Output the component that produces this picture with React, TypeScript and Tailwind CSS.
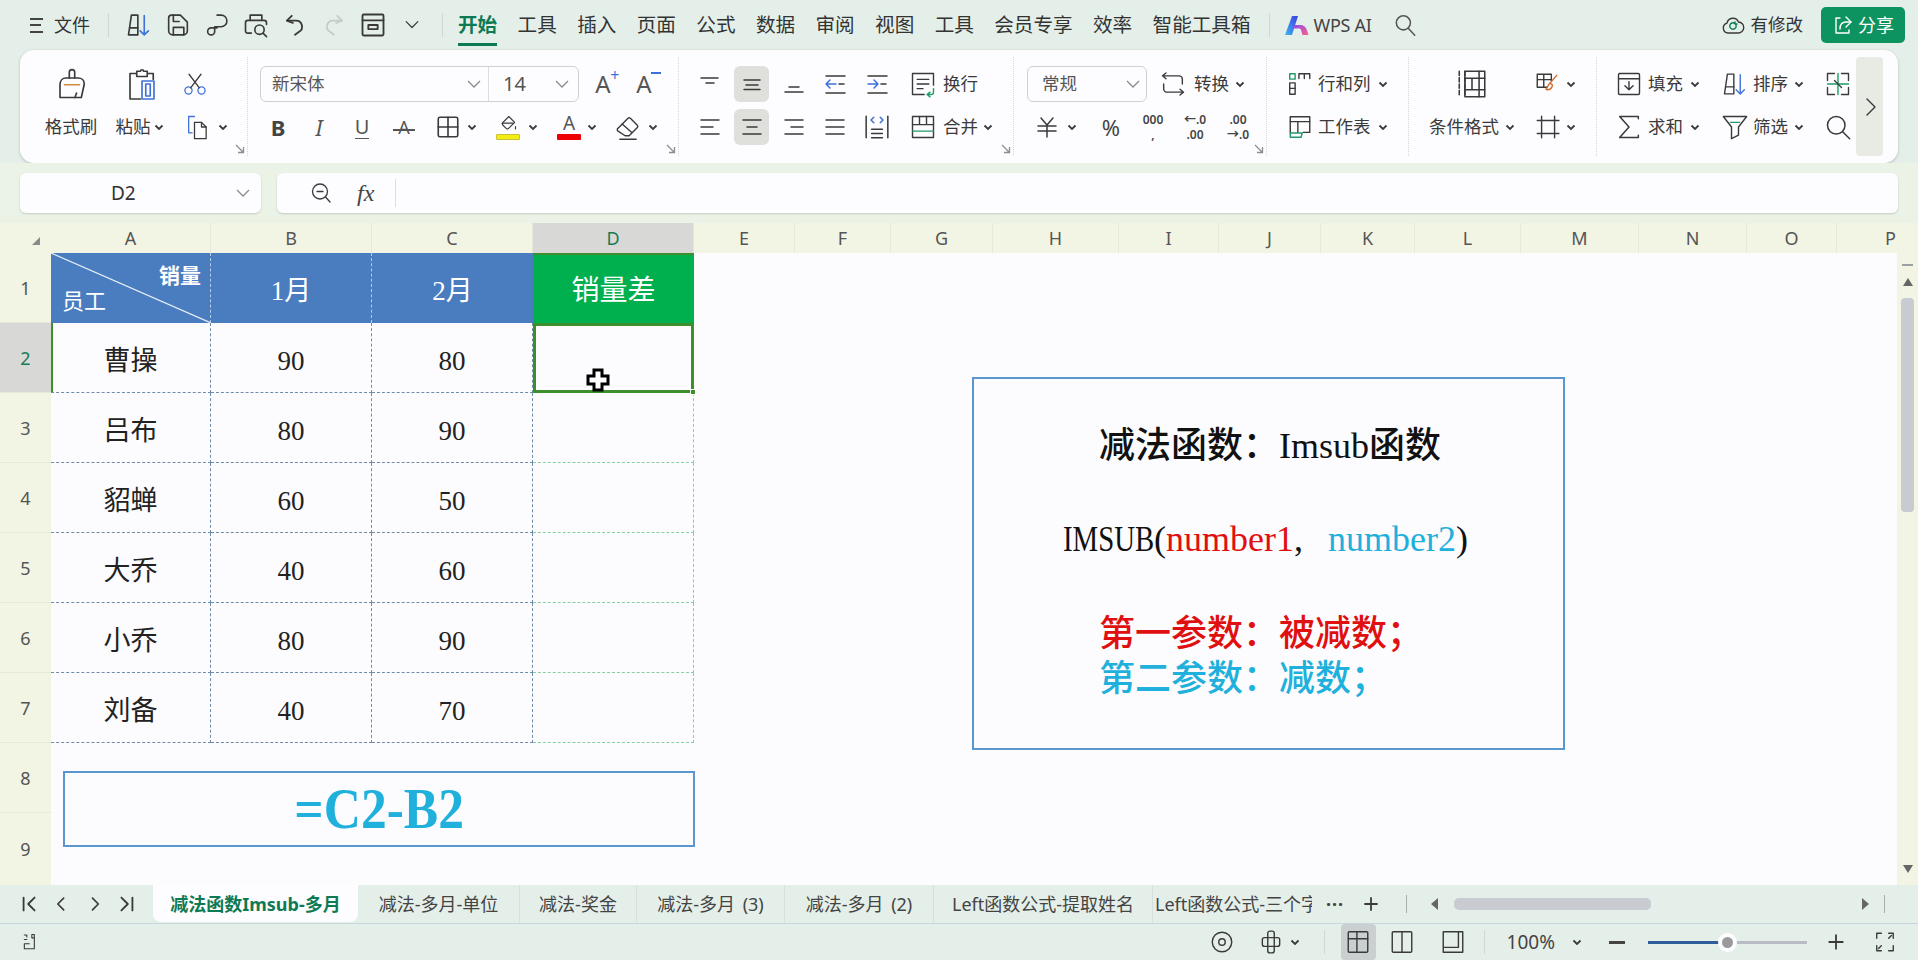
import React from 'react';

const uiFont = "font-['Noto_Sans','Noto_Sans_CJK_SC',sans-serif]";
const cellFont = "font-['Liberation_Serif','Noto_Sans_CJK_SC',serif]";

const Ic = ({ s = 24, w = 1.4, c = '#3a3a3a', children }: { s?: number; w?: number; c?: string; children: React.ReactNode }) => (
  <svg width={s} height={s} viewBox="0 0 24 24" fill="none" stroke={c} strokeWidth={w} strokeLinecap="round" strokeLinejoin="round">
    {children}
  </svg>
);

const Slot = ({ className = '', children }: { className?: string; children?: React.ReactNode }) => (
  <div className={`flex items-center justify-center shrink-0 ${className}`}>{children}</div>
);

const Row = ({ className = '', children }: { className?: string; children: React.ReactNode }) => (
  <div className={`flex items-center h-[42px] ${className}`}>{children}</div>
);

const Chev = () => (
  <Slot className="w-[12px]">
    <svg width="10" height="7" viewBox="0 0 10 7" fill="none" stroke="#3a3a3a" strokeWidth="1.8">
      <path d="M1.5 1.5L5 5l3.5-3.5" />
    </svg>
  </Slot>
);

const SelectChev = () => (
  <svg width="16" height="10" viewBox="0 0 16 10" fill="none" stroke="#8a8a8a" strokeWidth="1.3">
    <path d="M2 2l6 6 6-6" />
  </svg>
);

const Launcher = () => (
  <svg className="absolute right-[2px] bottom-[2px]" width="10" height="10" viewBox="0 0 10 10" fill="none" stroke="#8d8d8d" strokeWidth="1.3">
    <path d="M1 1l7 7M8.5 3v5.5H3" />
  </svg>
);

const Label = ({ children, className = '' }: { children: React.ReactNode; className?: string }) => (
  <span className={`text-[17.5px] leading-none whitespace-nowrap text-[#3a3a3a] ${className}`}>{children}</span>
);

const Lines = ({ d }: { d: string }) => (
  <Ic s={24} w={1.5}>
    <path d={d} />
  </Ic>
);

const CornerFloat = () => (
  <svg width="10" height="10" viewBox="0 0 10 10" className="ml-[21px] mt-[13px]">
    <path d="M9 1v8H1z" fill="#8a8a8a" />
  </svg>
);

const topTabs = ['工具', '插入', '页面', '公式', '数据', '审阅', '视图', '工具', '会员专享', '效率', '智能工具箱'];

const TopBar = () => (
  <div className="flex items-center h-[50px] shrink-0 text-[#333]">
    <div className="ml-[30px] w-[13px] h-[15px] flex flex-col justify-between">
      <div className="h-[2px] bg-[#444]" />
      <div className="h-[2px] w-[11px] bg-[#444]" />
      <div className="h-[2px] bg-[#444]" />
    </div>
    <span className="ml-[11px] text-[18px] leading-none">文件</span>
    <div className="ml-[18px] w-px h-[24px] bg-[#cfd8d4]" />
    <div className="ml-[12px] flex gap-[3px]">
      <Slot className="w-[36px]">
        <Ic s={28}>
          <path d="M3 20.5L5.5 3.5H11v17z" />
          <path d="M4 14.5h7" />
          <path d="M16.5 4v16.5M13 17l3.5 3.5L20 17" stroke="#3f72d8" />
        </Ic>
      </Slot>
      <Slot className="w-[36px]">
        <Ic s={28}>
          <path d="M4 6a2.5 2.5 0 0 1 2.5-2.5H14l6 6V17a3.5 3.5 0 0 1-3.5 3.5h-9A3.5 3.5 0 0 1 4 17z" />
          <path d="M8 20.5V14h9v6.5M8 3.5V9h5" />
        </Ic>
      </Slot>
      <Slot className="w-[36px]">
        <Ic s={28}>
          <path d="M12 3.5h3.5a5 5 0 0 1 0 10H10v4a3 3 0 1 1-3-3h5" />
        </Ic>
      </Slot>
      <Slot className="w-[36px]">
        <Ic s={28}>
          <path d="M7 8V3.5h10V8" />
          <path d="M8 19H5a2 2 0 0 1-2-2V10a2 2 0 0 1 2-2h14a2 2 0 0 1 2 2v1.5" />
          <circle cx="15" cy="16" r="4" />
          <path d="M18 19l3 3" />
        </Ic>
      </Slot>
      <Slot className="w-[36px]">
        <Ic s={26} w={1.7}>
          <path d="M9 3.5L4.5 8 10 10" />
          <path d="M5 8h8a5.5 5.5 0 0 1 2.5 10.4L12 21" />
        </Ic>
      </Slot>
      <Slot className="w-[36px]">
        <Ic s={26} w={1.7} c="#c6cdc9">
          <path d="M15 3.5L19.5 8 14 10" />
          <path d="M19 8h-8a5.5 5.5 0 0 0-2.5 10.4L12 21" />
        </Ic>
      </Slot>
      <Slot className="w-[36px]">
        <Ic s={28} w={1.6}>
          <rect x="3" y="3" width="18" height="18" rx="1" />
          <path d="M3 8h18" />
          <rect x="8" y="12" width="8" height="3.5" />
        </Ic>
      </Slot>
      <Slot className="w-[36px]">
        <Ic s={20} w={1.5}>
          <path d="M5 8l7 7 7-7" />
        </Ic>
      </Slot>
    </div>
    <div className="ml-[12px] w-px h-[24px] bg-[#cfd8d4]" />
    <div className="ml-[15px] flex items-center gap-[20.4px] text-[19.6px] leading-none whitespace-nowrap">
      <span className="relative font-bold text-[#0e7a53]">
        开始
        <span className="absolute left-0 right-0 top-[28px] h-[3px] bg-[#0e7a53]" />
      </span>
      {topTabs.map((t, i) => (
        <span key={i}>{t}</span>
      ))}
    </div>
    <div className="ml-[18px] w-px h-[24px] bg-[#cfd8d4]" />
    <svg className="ml-[14px]" width="26" height="19" viewBox="0 0 26 19">
      <defs>
        <linearGradient id="wpsA" x1="0" y1="1" x2="1" y2="0">
          <stop offset="0" stopColor="#3fb5f0" />
          <stop offset="1" stopColor="#3b3fe0" />
        </linearGradient>
        <linearGradient id="wpsB" x1="0" y1="0" x2="1" y2="1">
          <stop offset="0" stopColor="#8a4cf0" />
          <stop offset="1" stopColor="#ff5f8a" />
        </linearGradient>
      </defs>
      <path d="M1 19L8 0h6L8 19z" fill="url(#wpsA)" />
      <path d="M10.5 9h6c3 0 5 2 6 4l2 6h-6l-1.5-5c-.5-1.2-1-1.5-2-1.5H9z" fill="url(#wpsB)" />
    </svg>
    <span className="ml-[4px] text-[18px] leading-none text-[#444] tracking-[-0.3px]">WPS AI</span>
    <div className="ml-[20px]">
      <Ic s={26} w={1.4} c="#555">
        <circle cx="10.5" cy="10" r="6.5" />
        <path d="M15 15l6 6.5" />
      </Ic>
    </div>
    <div className="ml-auto flex items-center">
      <Ic s={24} w={1.4}>
        <path d="M7 20a5 5 0 0 1-1-9.8A6 6 0 0 1 17.5 9 5.5 5.5 0 0 1 17 20z" />
        <path d="M15 12a3.2 3.2 0 1 1-1.2-1.6M14 9v2h2" stroke="#0e7a53" />
      </Ic>
      <span className="ml-[6px] text-[17.5px] leading-none">有修改</span>
      <div className="ml-[18px] mr-[13px] w-[84px] h-[36px] rounded-[5px] bg-[#0c9360] flex items-center pl-[10px] text-white">
        <Ic s={24} w={1.4} c="#fff">
          <path d="M15 4l5 5-5 5" />
          <path d="M20 9h-5c-4 0-6 3-6 7" />
          <path d="M9 5H5v15h13v-3" />
        </Ic>
        <span className="ml-[3px] text-[18px] leading-none">分享</span>
      </div>
    </div>
  </div>
);

const Group = ({ className = '', launcher = true, children }: { className?: string; launcher?: boolean; children: React.ReactNode }) => (
  <div className={`relative h-full shrink-0 pt-[6px] border-r border-dotted border-[#d3d6da] ${className}`}>
    {children}
    {launcher && <Launcher />}
  </div>
);

const Ribbon = () => (
  <div className="mx-[20px] h-[113px] shrink-0 rounded-[14px] bg-[#fdfdff] shadow-[0_1px_3px_rgba(90,100,100,0.35)] flex py-[7px]">
    {/* 剪贴板 */}
    <Group className="w-[228px] pl-[16px] flex gap-y-px">
      <div className="w-[70px] flex flex-col gap-px">
        <Row className="justify-center pl-[2px]">
          <Ic s={36} w={1.1}>
            <path d="M10.2 8V4.2a1.8 1.8 0 0 1 3.6 0V8" />
            <path d="M4 12.5C4 10 5.5 8 8 8h8c2.5 0 4.2 1.6 4.2 4l-2 9H4z" />
            <path d="M7 12.5h10" stroke="#d08a3a" />
            <path d="M14 21l1-3" />
          </Ic>
        </Row>
        <Row className="justify-center">
          <Label>格式刷</Label>
        </Row>
      </div>
      <div className="w-[72px] flex flex-col gap-px">
        <Row className="justify-center">
          <Ic s={36} w={1.1}>
            <path d="M8 5H4v17h7" />
            <path d="M8.5 7V3.5h2.5a1 1 0 0 1 2 0h2.5V7z" />
            <path d="M16 5h3.5v4" />
            <rect x="12" y="10" width="8" height="12" stroke="#3f72d8" />
            <rect x="14.5" y="12" width="3" height="8" stroke="#3f72d8" />
          </Ic>
        </Row>
        <Row className="justify-center gap-[2px] pr-[4px]">
          <Label>粘贴</Label>
          <Chev />
        </Row>
      </div>
      <div className="w-[54px] flex flex-col gap-px">
        <Row className="justify-start pl-[4px]">
          <Ic s={26} w={1.2}>
            <circle cx="6" cy="18" r="3.3" stroke="#3f72d8" />
            <circle cx="18" cy="18" r="3.3" stroke="#3f72d8" />
            <path d="M8 15.5L17.5 3M16 15.5L6.5 3" />
          </Ic>
        </Row>
        <Row className="justify-start pl-[6px]">
          <Ic s={28} w={1.1}>
            <path d="M9 3H4v14h3" stroke="#3f72d8" />
            <path d="M9 8h6l4 4v10H9z" />
            <path d="M15 8v4h4" />
          </Ic>
          <div className="ml-[5px]">
            <Chev />
          </div>
        </Row>
      </div>
    </Group>

    {/* 字体 */}
    <Group className="w-[431px]">
      <Row className="pl-[12px]">
        <div className="w-[319px] h-[36px] rounded-[6px] border border-[#cfd0d6] flex items-center text-[#555]">
          <div className="w-[228px] h-full pl-[11px] pr-[6px] flex items-center justify-between border-r border-[#dcdde2] text-[17.5px] leading-none">
            新宋体
            <SelectChev />
          </div>
          <div className="flex-1 h-full pl-[14px] pr-[8px] flex items-center justify-between text-[20px] leading-none">
            14
            <SelectChev />
          </div>
        </div>
        <Slot className="ml-[5px] w-[38px]">
          <span className="relative text-[24px] leading-none text-[#555]">
            A
            <span className="absolute left-[15px] top-[-5px] text-[16px] text-[#3f72d8]">+</span>
          </span>
        </Slot>
        <Slot className="w-[44px]">
          <span className="relative text-[24px] leading-none text-[#555]">
            A
            <span className="absolute left-[15px] top-[0px] w-[10px] h-[2px] bg-[#3f72d8]" />
          </span>
        </Slot>
      </Row>
      <Row className="mt-px pl-[10px]">
        <Slot className="w-[40px] text-[22px] font-bold leading-none text-[#444]">B</Slot>
        <Slot className="w-[42px] text-[22px] italic leading-none text-[#555]">I</Slot>
        <Slot className="w-[44px]">
          <span className="text-[20px] leading-[22px] text-[#555] border-b-[1.5px] border-[#555]">U</span>
        </Slot>
        <Slot className="w-[40px]">
          <span className="relative text-[18px] leading-none text-[#555]">
            A
            <span className="absolute left-[-5px] right-[-5px] top-[11px] h-[2px] bg-[#555]" />
          </span>
        </Slot>
        <Slot className="ml-[6px] w-[36px]">
          <Ic s={26} w={1.5}>
            <rect x="3" y="3" width="18" height="18" rx="1.5" />
            <path d="M12 3v18M3 12h18" />
          </Ic>
        </Slot>
        <Chev />
        <Slot className="ml-[12px] w-[36px]">
          <div className="flex flex-col items-center">
            <Ic s={20} w={1.4}>
              <path d="M13 3l7 7-7 7a2.5 2.5 0 0 1-3.5 0L6 13.5a2.5 2.5 0 0 1 0-3.5z" />
              <path d="M5 11h13M21 15v3" />
            </Ic>
            <div className="w-[24px] h-[6px] rounded-[1px] bg-[#f4ec12] border border-[#c6c23a]" />
          </div>
        </Slot>
        <div className="ml-px">
          <Chev />
        </div>
        <Slot className="ml-[13px] w-[34px]">
          <div className="flex flex-col items-center">
            <span className="text-[19px] leading-[19px] text-[#555]">A</span>
            <div className="w-[24px] h-[6px] mt-[1px] rounded-[1px] bg-[#ee0000]" />
          </div>
        </Slot>
        <Chev />
        <Slot className="ml-[12px] w-[36px]">
          <Ic s={28} w={1.2}>
            <path d="M3.5 13L12 4.5a1.5 1.5 0 0 1 2 0l6 6a1.5 1.5 0 0 1 0 2L13 19.5H9.5l-6-4a1.5 1.5 0 0 1 0-2.5z" />
            <path d="M7 9.5l8 7" />
            <path d="M5 22.5h14" />
          </Ic>
        </Slot>
        <div className="ml-px">
          <Chev />
        </div>
      </Row>
    </Group>

    {/* 对齐 */}
    <Group className="w-[335px]">
      <Row className="pl-[10px]">
        <Slot className="w-[42px]">
          <Lines d="M3 6h17M8 11h8" />
        </Slot>
        <Slot className="ml-[3px] w-[35px] h-[36px] rounded-[6px] bg-[#dfe0dc]">
          <Lines d="M4 8h16M6 13h12M4 17.5h16" />
        </Slot>
        <Slot className="w-[50px]">
          <Lines d="M7 15h10M3 20h18" />
        </Slot>
        <Slot className="w-[32px]">
          <Ic s={24} w={1.5}>
            <path d="M3 4h19M3 21h19M16 12h5" />
            <path d="M13 12H3M7 8l-4 4 4 4" stroke="#3f72d8" />
          </Ic>
        </Slot>
        <Slot className="w-[52px]">
          <Ic s={24} w={1.5}>
            <path d="M3 4h19M3 21h19M16 12h5" />
            <path d="M3 12h10M9 8l4 4-4 4" stroke="#3f72d8" />
          </Ic>
        </Slot>
        <Slot className="w-[40px]">
          <Ic s={28} w={1.2}>
            <path d="M21 13V3H3v18h10" />
            <path d="M7 8h10M7 12h10M7 16h5" />
            <path d="M21 16v3a2 2 0 0 1-2 2h-3M18 19l-2.5 2 2.5 2" stroke="#1f9a68" />
          </Ic>
        </Slot>
        <Label>换行</Label>
      </Row>
      <Row className="mt-px pl-[10px]">
        <Slot className="w-[42px]">
          <Lines d="M3 5h18M3 12h12M3 19h18" />
        </Slot>
        <Slot className="ml-[3px] w-[35px] h-[36px] rounded-[6px] bg-[#dfe0dc]">
          <Lines d="M3 5h18M7 12h10M3 19h18" />
        </Slot>
        <Slot className="w-[50px]">
          <Lines d="M3 5h18M9 12h12M3 19h18" />
        </Slot>
        <Slot className="w-[32px]">
          <Lines d="M3 5h18M3 12h18M3 19h18" />
        </Slot>
        <Slot className="w-[52px]">
          <Ic s={26} w={1.4}>
            <path d="M2 2v20M22 2v20M7 14h10M7 18h10M7 22h10" />
            <path d="M9 3L6.5 5.5 9 8M15 3l2.5 2.5L15 8" stroke="#3f72d8" />
          </Ic>
        </Slot>
        <Slot className="w-[40px]">
          <Ic s={28} w={1.2}>
            <rect x="3" y="3" width="18" height="18" />
            <path d="M9 3v7M15 3v7M3 10h18" />
            <path d="M3 15.5h18" stroke="#1f9a68" />
          </Ic>
        </Slot>
        <Label>合并</Label>
        <div className="ml-[4px]">
          <Chev />
        </div>
      </Row>
    </Group>

    {/* 数字 */}
    <Group className="w-[253px]">
      <Row className="pl-[13px]">
        <div className="w-[120px] h-[36px] rounded-[6px] border border-[#cfd0d6] pl-[14px] pr-[5px] flex items-center justify-between text-[17.5px] leading-none text-[#555]">
          常规
          <SelectChev />
        </div>
        <Slot className="ml-[5px] w-[42px]">
          <Ic s={28} w={1.2}>
            <path d="M6 2.5L3 5l3 2.5M3 5h14a3 3 0 0 1 3 3v4" />
            <path d="M18 21.5L21 19l-3-2.5M21 19H7a3 3 0 0 1-3-3v-4" />
          </Ic>
        </Slot>
        <Label>转换</Label>
        <div className="ml-[5px]">
          <Chev />
        </div>
      </Row>
      <Row className="mt-px pl-[18px]">
        <Slot className="w-[30px]">
          <Ic s={24} w={1.5}>
            <path d="M6 3l6 7 6-7M3 11h18M3 16h18M12 10v12" />
          </Ic>
        </Slot>
        <div className="ml-[4px]">
          <Chev />
        </div>
        <Slot className="ml-[13px] w-[40px] text-[22px] leading-none text-[#444]">%</Slot>
        <Slot className="ml-[2px] w-[40px] flex-col text-[#444] font-semibold text-[12px] leading-[15px]">
          <span>000</span>
          <span>,</span>
        </Slot>
        <Slot className="ml-[2px] w-[40px] flex-col text-[12px] leading-[15px] font-semibold text-[#444]">
          <span>←.0</span>
          <span>.00</span>
        </Slot>
        <Slot className="ml-[3px] w-[40px] flex-col text-[12px] leading-[15px] font-semibold text-[#444]">
          <span>.00</span>
          <span>→.0</span>
        </Slot>
      </Row>
    </Group>

    {/* 行列 */}
    <Group className="w-[142px]" launcher={false}>
      <Row className="pl-[20px]">
        <Slot className="w-[26px]">
          <Ic s={26} w={1.3}>
            <rect x="2.5" y="2.5" width="5" height="5" stroke="#1f9a68" />
            <path d="M11 7V2.5h10V7M16 2.5V7" />
            <rect x="2.5" y="11" width="5" height="10.5" />
            <path d="M2.5 16h5" />
          </Ic>
        </Slot>
        <Label className="ml-[5px]">行和列</Label>
        <div className="ml-[6px]">
          <Chev />
        </div>
      </Row>
      <Row className="mt-px pl-[20px]">
        <Slot className="w-[26px]">
          <Ic s={26} w={1.3}>
            <path d="M3 17V2.5h18V17h-6" />
            <path d="M3 7h18M10 7v10" />
            <path d="M3 17.5h11l-1 4H3z" stroke="#1f9a68" />
          </Ic>
        </Slot>
        <Label className="ml-[5px]">工作表</Label>
        <div className="ml-[6px]">
          <Chev />
        </div>
      </Row>
    </Group>

    {/* 样式 */}
    <Group className="w-[188px] pl-[20px]" launcher={false}>
      <Row className="w-[160px]">
        <Slot className="w-[86px]">
          <Ic s={34} w={1.1}>
            <path d="M3 3v18" strokeDasharray="3 1.5" />
            <path d="M7 3h14v18H7z" />
            <path d="M7 3v18" strokeDasharray="3 1.5" />
            <path d="M7 8h14M7 16h14M12 8v8M17 3v18" />
          </Ic>
        </Slot>
        <Slot className="ml-[15px] w-[34px]">
          <Ic s={26} w={1.3}>
            <path d="M12 15H3V3h13v6M3 8h13M9 3v12" />
            <path d="M21 4l-6 7" stroke="#d06a2a" />
            <path d="M15 11c-2 1-2 4-4 6 3 1 6-1 6-4z" stroke="#d06a2a" />
          </Ic>
        </Slot>
        <div className="ml-px">
          <Chev />
        </div>
      </Row>
      <Row className="w-[160px] mt-px">
        <Label className="w-[70px]">条件格式</Label>
        <div className="ml-[5px]">
          <Chev />
        </div>
        <Slot className="ml-[14px] w-[34px]">
          <Ic s={26} w={1.3}>
            <path d="M7 2v20M19 2v20M3 6h20M3 18h20" />
          </Ic>
        </Slot>
        <div className="ml-px">
          <Chev />
        </div>
      </Row>
    </Group>

    {/* 编辑 */}
    <div className="h-full w-[259px] shrink-0 pt-[6px]">
      <Row className="pl-[18px]">
        <Slot className="w-[28px]">
          <Ic s={28} w={1.2}>
            <rect x="3" y="3" width="18" height="18" rx="1" />
            <path d="M3 7.5h18" />
            <path d="M12 10v7M8.5 13.5L12 17l3.5-3.5" />
          </Ic>
        </Slot>
        <Label className="ml-[5px]">填充</Label>
        <div className="ml-[6px]">
          <Chev />
        </div>
        <Slot className="ml-[20px] w-[28px]">
          <Ic s={28} w={1.2}>
            <path d="M3 20.5L5.5 3.5H11v17z" />
            <path d="M4 14.5h7" />
            <path d="M16.5 4v16.5M13 17l3.5 3.5L20 17" stroke="#3f72d8" />
          </Ic>
        </Slot>
        <Label className="ml-[4px]">排序</Label>
        <div className="ml-[5px]">
          <Chev />
        </div>
        <Slot className="ml-[19px] w-[28px]">
          <Ic s={28} w={1.2}>
            <path d="M3 9V3h6M15 3h6v6M3 15v6h6M21 15v6h-6" />
            <path d="M12 3v18M3 12h18" stroke="#1f9a68" />
            <path d="M9 9l6 6" />
          </Ic>
        </Slot>
      </Row>
      <Row className="mt-px pl-[18px]">
        <Slot className="w-[28px]">
          <Ic s={28} w={1.3}>
            <path d="M20 5V3H4l8 9-8 9h16v-2" />
          </Ic>
        </Slot>
        <Label className="ml-[5px]">求和</Label>
        <div className="ml-[6px]">
          <Chev />
        </div>
        <Slot className="ml-[20px] w-[28px]">
          <Ic s={28} w={1.2}>
            <path d="M2 3h20l-7 9v7l-6 3V12z" />
            <path d="M8 8h8" stroke="#1f9a68" />
          </Ic>
        </Slot>
        <Label className="ml-[4px]">筛选</Label>
        <div className="ml-[5px]">
          <Chev />
        </div>
        <Slot className="ml-[19px] w-[28px]">
          <Ic s={28} w={1.3}>
            <circle cx="10.5" cy="10.5" r="7.5" />
            <path d="M16 16l6 6" />
          </Ic>
        </Slot>
      </Row>
    </div>
    <Slot className="w-[27px] h-full rounded-[4px] bg-[#e8ebe4]">
      <Ic s={24} w={1.4}>
        <path d="M9 4l8 8-8 8" />
      </Ic>
    </Slot>
  </div>
);

const FormulaRow = () => (
  <div className="px-[20px] py-[10px] h-[60px] shrink-0 flex gap-[16px] bg-[#ebf2e6]">
    <div className="w-[241px] rounded-[6px] bg-[#fdfdff] pl-[91px] pr-[10px] flex items-center justify-between text-[19px] leading-none text-[#333] shadow-[0_1px_2px_rgba(90,100,100,0.25)]">
      D2
      <SelectChev />
    </div>
    <div className="flex-1 rounded-[6px] bg-[#fdfdff] pl-[32px] flex items-center shadow-[0_1px_2px_rgba(90,100,100,0.25)]">
      <Ic s={24} w={1.3}>
        <circle cx="11" cy="10.5" r="7.5" />
        <path d="M8 10.5h6M16.5 16l4.5 5" />
      </Ic>
      <span className="ml-[24px] text-[24px] italic leading-none text-[#444] font-['Liberation_Serif',serif]">fx</span>
      <div className="ml-[21px] w-px h-[28px] bg-[#dcdfe4]" />
    </div>
  </div>
);

const cols: [string, string][] = [
  ['A', 'w-[160px]'],
  ['B', 'w-[161px]'],
  ['C', 'w-[161px]'],
  ['D', 'w-[161px] bg-[#d8d9d6] text-[#1a7a55]'],
  ['E', 'w-[101px]'],
  ['F', 'w-[96px]'],
  ['G', 'w-[102px]'],
  ['H', 'w-[126px]'],
  ['I', 'w-[100px]'],
  ['J', 'w-[102px]'],
  ['K', 'w-[94px]'],
  ['L', 'w-[106px]'],
  ['M', 'w-[118px]'],
  ['N', 'w-[108px]'],
  ['O', 'w-[90px]'],
  ['P', 'w-[108px]'],
];

const ColumnHeader = () => (
  <div className="h-[30px] shrink-0 flex overflow-hidden text-[18px] leading-none text-[#555] bg-[#f2f4e4]">
    <Slot className="w-[51px] items-start">
      <CornerFloat />
    </Slot>
    {cols.map(([name, cls]) => (
      <Slot key={name} className={`h-full border-r border-[#e7e8d8] ${cls}`}>
        {name}
      </Slot>
    ))}
  </div>
);

const RowHeader = () => (
  <div className="w-[51px] shrink-0 flex flex-col text-[18px] leading-none text-[#555]">
    {[1, 2, 3, 4, 5, 6, 7, 8].map((n) => (
      <Slot key={n} className={`h-[70px] border-b border-[#e7e8d8] ${n === 2 ? 'bg-[#d8d9d6] text-[#1a7a55]' : ''}`}>
        {n}
      </Slot>
    ))}
    <Slot className="flex-1">9</Slot>
  </div>
);

const rows = [
  ['曹操', '90', '80'],
  ['吕布', '80', '90'],
  ['貂蝉', '60', '50'],
  ['大乔', '40', '60'],
  ['小乔', '80', '90'],
  ['刘备', '40', '70'],
];

const dashB = 'border-r border-b border-dashed border-[#6f8cab] pt-[8px]';
const dashD = 'border-r border-b border-dashed border-[#86cfa0]';

const Table = () => (
  <div className={`grid grid-cols-[160px_161px_161px_161px] auto-rows-[70px] w-[643px] text-[27px] leading-none text-[#222] ${cellFont}`}>
    <div className="relative bg-[#4a7dc0] border-r border-dashed border-[#b7cbe6] text-white">
      <svg className="absolute inset-0" width="160" height="70" viewBox="0 0 160 70">
        <path d="M0 0L160 70" stroke="#e6eef8" strokeWidth="1.2" />
      </svg>
      <span className="absolute right-[9px] top-[13px] text-[21px] leading-none font-bold">销量</span>
      <span className="absolute left-[11px] bottom-[10px] text-[22px] leading-none">员工</span>
    </div>
    <div className="flex items-center justify-center pt-[6px] bg-[#4a7dc0] border-r border-dashed border-[#b7cbe6] text-white">1月</div>
    <div className="flex items-center justify-center pt-[6px] bg-[#4a7dc0] text-white">2月</div>
    <div className="flex items-center justify-center pt-[4px] bg-[#00b04f] border-t-2 border-[#3c8f2c] text-white text-[28px]">销量差</div>
    {rows.map((r, i) => (
      <React.Fragment key={r[0]}>
        <div className={`relative flex items-center justify-center ${dashB}`}>
          {i === 0 && <div className="absolute left-0 top-0 bottom-0 w-[2px] bg-[#3c8f2c]" />}
          {r[0]}
        </div>
        <div className={`flex items-center justify-center ${dashB}`}>{r[1]}</div>
        <div className={`flex items-center justify-center ${dashB}`}>{r[2]}</div>
        {i === 0 ? (
          <div className="relative border-[3px] border-[#3c8f2c]">
            <div className="absolute right-[-5px] bottom-[-5px] w-[6px] h-[6px] bg-[#3c8f2c] border border-[#fdfdff]" />
          </div>
        ) : (
          <div className={dashD} />
        )}
      </React.Fragment>
    ))}
  </div>
);

const Sheet = () => (
  <div className="relative flex-1 bg-[#fcfcfe] overflow-hidden">
    <Table />
    {/* 浮动文本框 */}
    <div className="absolute left-[12px] top-[518px] w-[632px] h-[76px] border-2 border-[#5b97cf] flex items-center justify-center">
      <span className={`inline-block scale-x-[0.92] text-[56px] leading-none font-bold text-[#1fb0dc] ${cellFont}`}>=C2-B2</span>
    </div>
    <div className="absolute left-[921px] top-[124px] w-[593px] h-[373px] border-2 border-[#5b97cf] text-[36px] leading-none font-['Liberation_Serif','Noto_Sans_CJK_SC',serif] text-[#111]">
      <div className="absolute left-[125px] top-[49px] whitespace-nowrap font-medium">减法函数：Imsub函数</div>
      <div className="absolute left-[89px] top-[142px] whitespace-nowrap font-medium">
        <span className="inline-block origin-left scale-x-[0.8] mr-[-23px]">IMSUB</span>(<span className="text-[#e01010]">number1</span>, <span className="ml-[16px] text-[#1fb0dc]">number2</span>)
      </div>
      <div className="absolute left-[125px] top-[237px] whitespace-nowrap font-medium text-[#e01010]">第一参数：被减数；</div>
      <div className="absolute left-[125px] top-[282px] whitespace-nowrap font-medium text-[#1fb0dc]">第二参数：减数；</div>
    </div>
    {/* 鼠标光标 */}
    <svg className="absolute left-[535px] top-[115px]" width="24" height="24" viewBox="0 0 24 24">
      <path d="M8 2h8v6h6v8h-6v6H8v-6H2V8h6z" fill="#fff" stroke="#000" strokeWidth="3" />
    </svg>
  </div>
);

const VScroll = () => (
  <div className="w-[21px] shrink-0 flex flex-col items-center pt-[11px] pb-[12px]">
    <div className="w-[11px] h-[2px] bg-[#9aa0a6]" />
    <svg className="mt-[12px]" width="10" height="8" viewBox="0 0 10 8">
      <path d="M5 0l5 8H0z" fill="#666" />
    </svg>
    <div className="mt-[12px] w-[13px] h-[214px] rounded-[4px] bg-[#c8ccd2]" />
    <svg className="mt-auto" width="10" height="8" viewBox="0 0 10 8">
      <path d="M5 8L0 0h10z" fill="#666" />
    </svg>
  </div>
);

const sheetTabs: [string, string][] = [
  ['减法-多月-单位', 'w-[162px]'],
  ['减法-奖金', 'w-[117px]'],
  ['减法-多月 (3)', 'w-[148px] [word-spacing:3px]'],
  ['减法-多月 (2)', 'w-[149px] [word-spacing:3px]'],
  ['Left函数公式-提取姓名', 'w-[219px]'],
];

const TabBar = () => (
  <div className="h-[39px] shrink-0 flex items-start border-b border-[#c7d6dd] text-[18px] leading-none text-[#444] whitespace-nowrap">
    <div className="w-[153px] h-[38px] pl-[19px] flex items-center shrink-0">
      <Ic s={22} w={2}>
        <path d="M5 5v14M17 5l-7 7 7 7" />
      </Ic>
      <div className="ml-[11px]">
        <Ic s={20} w={2}>
          <path d="M14 5l-7 7 7 7" />
        </Ic>
      </div>
      <div className="ml-[13px]">
        <Ic s={20} w={2}>
          <path d="M9 5l7 7-7 7" />
        </Ic>
      </div>
      <div className="ml-[10px]">
        <Ic s={22} w={2}>
          <path d="M19 5v14M7 5l7 7-7 7" />
        </Ic>
      </div>
    </div>
    <div className="w-[205px] h-[37px] shrink-0 rounded-b-[8px] bg-[#fdfdff] flex items-center justify-center font-bold text-[#0e7a53]">
      减法函数Imsub-多月
    </div>
    {sheetTabs.map(([t, w]) => (
      <Slot key={t} className={`h-[38px] border-r border-[#d5dfe0] ${w}`}>
        {t}
      </Slot>
    ))}
    <div className="w-[159px] h-[38px] shrink-0 overflow-hidden pl-[2px] flex items-center">Left函数公式-三个字段</div>
    <div className="h-[38px] flex items-center flex-1">
      <span className="ml-[14px] text-[18px] font-bold tracking-[1px] text-[#444]">···</span>
      <div className="ml-[18px]">
        <Ic s={18} w={2.4}>
          <path d="M12 4v16M4 12h16" />
        </Ic>
      </div>
      <div className="ml-[26px] w-px h-[18px] bg-[#aab0b0]" />
      <svg className="ml-[24px]" width="8" height="12" viewBox="0 0 8 12">
        <path d="M7 0v12L0 6z" fill="#666" />
      </svg>
      <div className="ml-[15px] w-[197px] h-[12px] rounded-[5px] bg-[#c8ccd0]" />
      <svg className="ml-[210px]" width="8" height="12" viewBox="0 0 8 12">
        <path d="M1 0v12l7-6z" fill="#666" />
      </svg>
      <div className="ml-[15px] w-px h-[18px] bg-[#aab0b0]" />
    </div>
  </div>
);

const StatusBar = () => (
  <div className="flex-1 flex items-center text-[#444]">
    <div className="ml-[21px]">
      <Ic s={20} w={1.3}>
        <path d="M10 14H4v6h12V3h-3v4h3M7 6V3.5H4M7 9H4" />
      </Ic>
    </div>
    <div className="ml-auto flex items-center h-full">
      <Ic s={26} w={1.3}>
        <circle cx="12" cy="12" r="9" />
        <circle cx="12" cy="12" r="3" />
      </Ic>
      <div className="ml-[23px]">
        <Ic s={26} w={1.3}>
          <rect x="9" y="2" width="6" height="20" rx="2" />
          <rect x="4" y="8" width="16" height="8" rx="2" />
        </Ic>
      </div>
      <div className="ml-[5px]">
        <Chev />
      </div>
      <div className="ml-[23px] w-px h-[24px] bg-[#cfd8d4]" />
      <Slot className="ml-[16px] w-[35px] h-full bg-[#c9d0cf] rounded-[4px]">
        <Ic s={26} w={1.3}>
          <rect x="3" y="2.5" width="18" height="19" rx="1" />
          <path d="M3 9h18M11 2.5v19" />
        </Ic>
      </Slot>
      <Slot className="ml-[9px] w-[35px]">
        <Ic s={26} w={1.3}>
          <rect x="3" y="2.5" width="18" height="19" rx="1" />
          <path d="M12 2.5v19" />
        </Ic>
      </Slot>
      <Slot className="ml-[16px] w-[35px]">
        <Ic s={26} w={1.3}>
          <path d="M3 17V2.5h18V21.5H3V17h14V2.5" />
        </Ic>
      </Slot>
      <div className="ml-[13px] w-px h-[24px] bg-[#cfd8d4]" />
      <span className="ml-[22px] text-[19px] leading-none">100%</span>
      <div className="ml-[16px]">
        <Chev />
      </div>
      <div className="ml-[26px] w-[16px] h-[3px] bg-[#444]" />
      <div className="ml-[23px] w-[79px] h-[3px] bg-[#2f5d9a]" />
      <div className="relative w-[80px] h-[3px] bg-[#b9bcc4]">
        <div className="absolute left-[-9px] top-[-8px] w-[19px] h-[19px] rounded-full bg-[#fdfdff] flex items-center justify-center">
          <div className="w-[11px] h-[11px] rounded-full bg-[#9a9a9a]" />
        </div>
      </div>
      <div className="ml-[20px]">
        <Ic s={18} w={2.4}>
          <path d="M12 3v18M3 12h18" />
        </Ic>
      </div>
      <div className="ml-[29px] mr-[22px]">
        <Ic s={22} w={1.5}>
          <path d="M8 2.5H3V8M16 2.5h5V8M3 16v5.5h5M21 16v5.5h-5M16 8l3-3M8 16l-3 3" />
        </Ic>
      </div>
    </div>
  </div>
);

export default function App() {
  return (
    <div className={`w-[1918px] h-[960px] overflow-hidden flex flex-col bg-[#e5efe9] ${uiFont}`}>
      <TopBar />
      <Ribbon />
      <FormulaRow />
      <ColumnHeader />
      <div className="h-[632px] shrink-0 flex bg-[#f2f4e4]">
        <RowHeader />
        <Sheet />
        <VScroll />
      </div>
      <TabBar />
      <StatusBar />
    </div>
  );
}
